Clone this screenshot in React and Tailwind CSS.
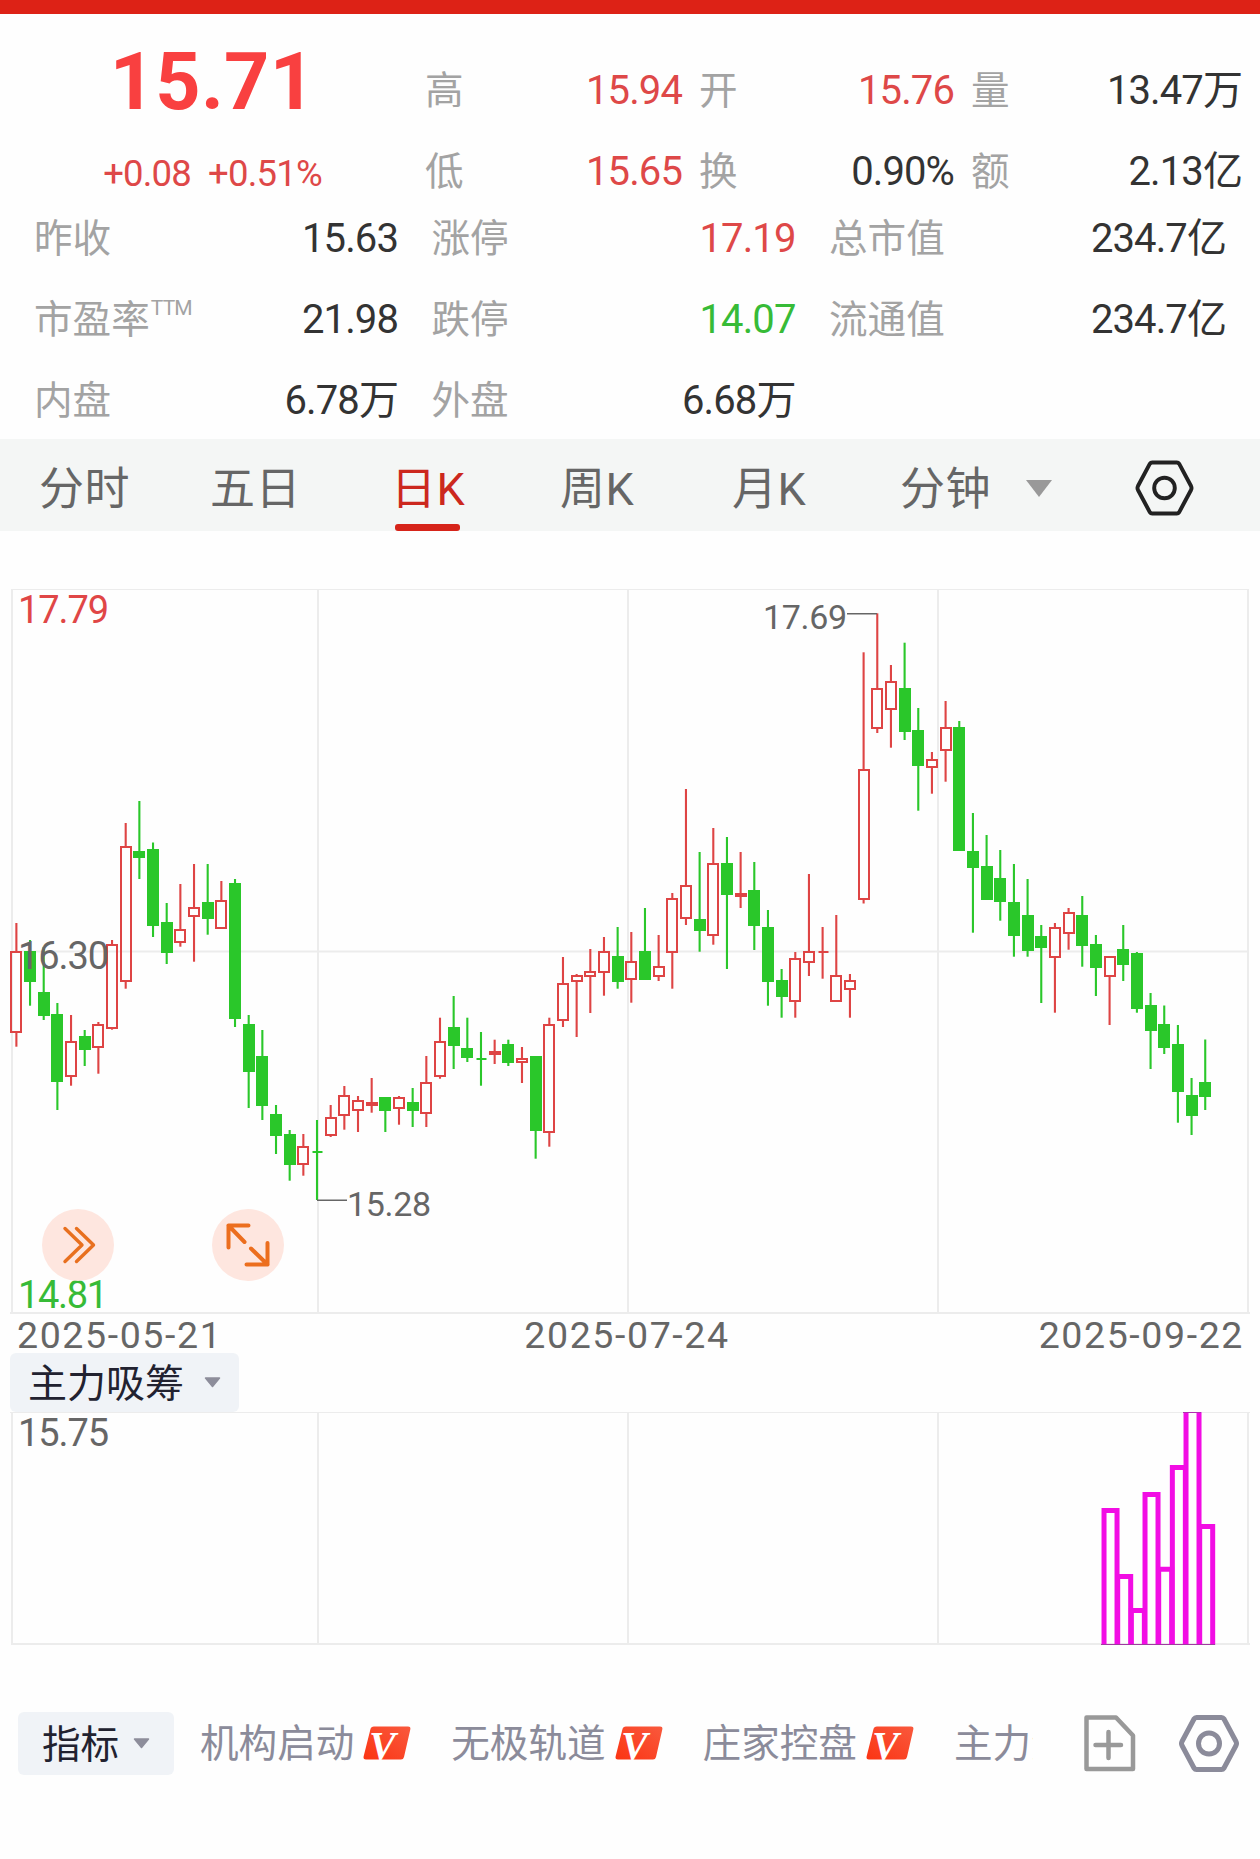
import React from 'react';

const UP = '#de4444';
const DOWN = '#2ac72a';
const GRID = '#ececec';

const STEP = 13.665;
const centerX = (i) => 16.33 + STEP * i;

// [direction, high, body top, body bottom, low] in chart units
const CANDLES = [
  ['u', 923, 951, 1033, 1046.7], ['d', 940, 951, 982, 1005.7], ['d', 947, 992, 1016, 1020],
  ['d', 1003, 1014, 1082, 1110], ['u', 1015, 1041, 1077, 1085.7], ['d', 1030, 1036, 1050, 1066],
  ['u', 1022, 1024, 1048, 1073.7], ['u', 940, 944, 1029, 1029.7], ['u', 823, 846, 982, 988.7],
  ['d', 801, 851, 858, 879], ['d', 842.5, 849, 926, 937], ['d', 903, 922, 953, 964],
  ['u', 884, 929, 943, 946.7], ['u', 864, 907, 917, 961.7], ['d', 864, 902, 919, 934.7],
  ['u', 881, 900, 929, 929], ['d', 879, 883, 1019, 1027], ['d', 1015, 1024, 1072, 1108],
  ['d', 1030, 1056, 1106, 1120], ['d', 1105, 1114, 1136, 1154], ['d', 1130, 1134, 1165, 1180.7],
  ['u', 1134, 1146, 1165, 1175.7], ['d', 1120, 1151, 1151, 1200], ['u', 1105, 1117, 1136, 1137],
  ['u', 1086, 1095, 1116, 1129.7], ['u', 1096, 1100, 1111, 1132], ['u', 1078, 1102, 1106, 1112.7],
  ['d', 1097, 1097, 1111, 1132], ['u', 1096, 1097, 1109, 1124.7], ['d', 1088, 1102, 1111, 1127],
  ['u', 1056, 1082, 1114, 1127], ['u', 1017.7, 1041, 1077, 1078.7], ['d', 996, 1027, 1046, 1069],
  ['d', 1017.7, 1048, 1058, 1062], ['d', 1032, 1058, 1058, 1085.7], ['u', 1039.7, 1051, 1055, 1064],
  ['d', 1039.7, 1044, 1063, 1066], ['u', 1047, 1058, 1063, 1083], ['d', 1056, 1056, 1131, 1158.7],
  ['u', 1017.7, 1024, 1133, 1146.7], ['u', 957, 983, 1021, 1027], ['u', 974, 975, 982, 1037],
  ['u', 949, 971, 977, 1013], ['u', 937, 951, 973, 995.7], ['d', 927, 956, 982, 988.7],
  ['u', 932, 961, 980, 1002.7], ['d', 908, 951, 980, 980], ['u', 935, 966, 977, 981],
  ['u', 893, 898, 953, 988.7], ['u', 789, 885, 919, 925], ['d', 852, 919, 931, 951.7],
  ['u', 828, 863, 936, 944.7], ['d', 837, 863, 895, 969], ['u', 852, 893, 897, 908],
  ['d', 862, 890, 926, 950], ['d', 910, 927, 982, 1005.7], ['d', 969, 980, 997, 1017.7],
  ['u', 952, 958, 1002, 1017.7], ['u', 874, 951, 963, 976], ['u', 927, 951, 951, 978.7],
  ['u', 915, 975, 1002, 1002], ['u', 974, 980, 990, 1017.7], ['u', 652.3, 769, 900, 903.5],
  ['u', 613.3, 688, 729, 733], ['u', 665, 681, 710, 747.7], ['d', 642.7, 688, 732, 740],
  ['d', 708, 730, 766, 810.7], ['u', 752, 759, 768, 793.7], ['u', 701, 727, 751, 781.7],
  ['d', 721, 727, 851, 851], ['d', 813, 851, 868, 932.7], ['d', 835, 866, 900, 900],
  ['d', 850, 878, 902, 920.7], ['d', 864, 902, 936, 956.7], ['d', 879, 915, 951, 956.7],
  ['d', 925, 936, 948, 1003], ['u', 923, 927, 958, 1012.7], ['u', 908, 912, 934, 949.7],
  ['d', 896, 915, 946, 966.7], ['d', 935, 944, 968, 996], ['u', 956, 956, 977, 1025],
  ['d', 925, 949, 965, 981], ['d', 952, 953, 1009, 1012.7], ['d', 993, 1005, 1031, 1069],
  ['d', 1005.5, 1024, 1048, 1054], ['d', 1025, 1044, 1092, 1122.7], ['d', 1078, 1095, 1116, 1135],
  ['d', 1039.5, 1082, 1097, 1110],
];

// tops of the last eight indicator bars
const BARS = [1508, 1574, 1608, 1492, 1566.7, 1465, 1408, 1524];

const TABS = [
  { label: '分时', width: 'w-[171px]' },
  { label: '五日', width: 'w-[171px]' },
  { label: '日K', width: 'w-[179px]', active: true },
  { label: '周K', width: 'w-[172px]' },
  { label: '月K', width: 'w-[168px]' },
  { label: '分钟', width: 'w-[107px]' },
];

const Candle = ({ index, data }) => {
  const [dir, high, top, bottom, low] = data;
  const x = centerX(index);
  const left = Math.round(x - 6);
  const color = dir === 'u' ? UP : DOWN;

  if (top === bottom) {
    return (
      <g fill={color}>
        <rect x={x - 1} y={high} width="2.1" height={low - high} />
        <rect x={left + 1.5} y={top} width="10" height="2" />
      </g>
    );
  }

  return (
    <g>
      <rect x={x - 1} y={high} width="2.1" height={top - high} fill={color} />
      <rect x={x - 1} y={bottom} width="2.1" height={low - bottom} fill={color} />
      {dir === 'u' ? (
        <rect x={left + 1} y={top + 1} width="10" height={bottom - top - 2} fill="none" stroke={color} strokeWidth="2" />
      ) : (
        <rect x={left} y={top} width="12" height={bottom - top} fill={color} />
      )}
    </g>
  );
};

const Label = ({ x, y, width, size = 38, fill = '#666', children }) => (
  <text x={x} y={y} fontSize={size} fill={fill} textLength={width}>
    {children}
  </text>
);

const PriceChart = () => (
  <svg viewBox="0 531 1260 783" className="block w-[1260px] h-[783px] overflow-visible">
    <g fill={GRID}>
      <rect x="11" y="589" width="1238" height="1" />
      <rect x="11" y="950.5" width="1238" height="2" />
      <rect x="10" y="1312" width="1240" height="2" />
      {[11, 317, 627, 937, 1247].map((x) => (
        <rect key={x} x={x} y="589" width="2" height="724" />
      ))}
    </g>
    {CANDLES.map((c, i) => (
      <Candle key={i} index={i} data={c} />
    ))}
    <path d="M847 613.7H877M317 1200.3H347" stroke="#666" strokeWidth="1.4" />
    <Label x="18" y="622.5" width="91" fill="#e04646">17.79</Label>
    <Label x="18" y="968.5" width="91">16.30</Label>
    <Label x="18" y="1307.5" width="90" fill="#37bb37">14.81</Label>
    <Label x="763" y="629" width="84" size={34}>17.69</Label>
    <Label x="347" y="1216" width="84" size={34}>15.28</Label>
  </svg>
);

const IndicatorChart = () => (
  <svg viewBox="0 1412 1260 233" className="block w-[1260px] h-[233px] overflow-hidden">
    <g fill={GRID}>
      <rect x="10" y="1412" width="1240" height="1" />
      <rect x="11" y="1643" width="1239" height="2" />
      {[11, 317, 627, 937, 1247].map((x) => (
        <rect key={x} x={x} y="1412" width="2" height="232" />
      ))}
    </g>
    <g fill="none" stroke="#f20de4" strokeWidth="5">
      {BARS.map((top, i) => {
        const x = centerX(80 + i) + 1;
        return <path key={i} d={`M${x - 6.5} 1645V${top + 2.5}H${x + 6.5}V1645`} />;
      })}
    </g>
    <path d="M1101 1644.5H1215" stroke="#a03aa0" strokeWidth="1" />
    <path d="M1183 1412.5H1201" stroke="#b030b0" strokeWidth="1" />
    <Label x="18" y="1445.5" width="91">15.75</Label>
  </svg>
);

const Caret = () => (
  <svg viewBox="0 0 17 11" className="w-[17px] h-[11px]">
    <path d="M1.5 1H15.5L8.5 9.5Z" fill="#8d8d9b" stroke="#8d8d9b" strokeWidth="1.5" strokeLinejoin="round" />
  </svg>
);

const HexIcon = ({ className, color, stroke }) => (
  <svg viewBox="0 0 60 57" className={className} fill="none" stroke={color} strokeWidth={stroke} strokeLinejoin="round">
    <path d="M17.5 2.5H42.5Q44 2.5 45 4L57 26.5Q58 28.5 57 30.5L45 53Q44 54.5 42.5 54.5H17.5Q16 54.5 15 53L3 30.5Q2 28.5 3 26.5L15 4Q16 2.5 17.5 2.5Z" />
    <circle cx="30" cy="28.5" r="10.5" />
  </svg>
);

const VipBadge = () => (
  <svg viewBox="0 0 48 34" className="w-[48px] h-[34px] shrink-0 overflow-visible">
    <defs>
      <linearGradient id="vip" x1="0" y1="1" x2="1" y2="0">
        <stop offset="0" stopColor="#fb3413" />
        <stop offset="1" stopColor="#f9593d" />
      </linearGradient>
    </defs>
    <path d="M11 0.5H45Q48 0.5 47.3 3.5L41 31Q40.4 33.5 38 33.5H3Q0 33.5 0.6 30.5L7.5 3Q8 0.5 11 0.5Z" fill="url(#vip)" />
    <text x="6" y="32.5" fontSize="40" fill="#fff" className="font-['Liberation_Serif',serif] font-bold italic">V</text>
  </svg>
);

const Stat = ({ label, sup, value, color = 'text-[#333]' }) => (
  <div className="flex items-center justify-between">
    <span className="text-[#a3a3a3] flex">
      {label}
      {sup && <sup className="top-0 mt-[1px] ml-[1px] text-[21px] leading-[32px] tracking-[-0.8px]">{sup}</sup>}
    </span>
    <span className={`text-[40px] tracking-[-0.9px] ${color}`}>{value}</span>
  </div>
);

const App = () => {
  return (
    <div className="w-[1260px] h-[1859px] overflow-hidden bg-[#fefefe] font-['Roboto','Noto_Sans_CJK_SC',sans-serif] text-[38.6px] whitespace-nowrap">
      <div className="h-[14px] bg-[#dd2216]" />

      {/* Quote summary */}
      <section className="h-[425px]">
        <div className="flex h-[184px] pt-[36px]">
          <div className="w-[425px] flex flex-col items-center text-[#de4848]">
            <div className="-mt-[1px] h-[63px] text-[79px] leading-[66px] font-bold text-[#f94040] tracking-[0.3px]">15.71</div>
            <div className="mt-[30px] flex gap-[17px] text-[36.5px] leading-[64px] tracking-[-0.8px]">
              <span>+0.08</span>
              <span>+0.51%</span>
            </div>
          </div>
          <div className="w-[817px] grid grid-cols-[257px_255px_271px] gap-x-[17px] auto-rows-[81px]">
            <Stat label="高" value="15.94" color="text-[#de4848]" />
            <Stat label="开" value="15.76" color="text-[#de4848]" />
            <Stat label="量" value="13.47万" />
            <Stat label="低" value="15.65" color="text-[#de4848]" />
            <Stat label="换" value="0.90%" />
            <Stat label="额" value="2.13亿" />
          </div>
        </div>
        <div className="ml-[34px] grid grid-cols-[364px_364px_397px] gap-x-[33.5px] auto-rows-[81px]">
          <Stat label="昨收" value="15.63" />
          <Stat label="涨停" value="17.19" color="text-[#de4848]" />
          <Stat label="总市值" value="234.7亿" />
          <Stat label="市盈率" sup="TTM" value="21.98" />
          <Stat label="跌停" value="14.07" color="text-[#37bb37]" />
          <Stat label="流通值" value="234.7亿" />
          <Stat label="内盘" value="6.78万" />
          <Stat label="外盘" value="6.68万" />
        </div>
      </section>

      {/* Period tabs */}
      <nav className="h-[92px] bg-[#f4f6f5] flex pl-[39px] text-[45px] leading-[101px] tracking-[0.4px] text-[#666]">
        {TABS.map((tab) => (
          <div key={tab.label} className={tab.width}>
            <div className={tab.active ? 'relative pl-[10px] text-[#cc281e]' : ''}>
              {tab.label}
              {tab.active && <span className="absolute left-[14px] top-[85px] w-[65px] h-[7px] rounded-[3px] bg-[#d6241a]" />}
            </div>
          </div>
        ))}
        <svg viewBox="0 0 26 17" className="w-[26px] h-[17px] mt-[41px] ml-[19px]">
          <path d="M0 0H26L13 17Z" fill="#999" />
        </svg>
        <HexIcon className="w-[59px] h-[56px] mt-[21px] ml-[83px]" color="#222" stroke="4" />
      </nav>

      {/* Candlestick chart */}
      <div className="relative">
        <PriceChart />
        <button className="absolute left-[42px] top-[678px] w-[72px] h-[72px] rounded-full bg-[#fee6df]">
          <svg viewBox="0 0 72 72" fill="none" stroke="#e8701f" strokeWidth="3.4" strokeLinecap="round" strokeLinejoin="round">
            <path d="M23 19.5L40 36L23 52.5M34.5 19.5L51.5 36L34.5 52.5" />
          </svg>
        </button>
        <button className="absolute left-[212px] top-[678px] w-[72px] h-[72px] rounded-full bg-[#fee6df]">
          <svg viewBox="0 0 72 72" fill="none" stroke="#ec6e1e" strokeWidth="4" strokeLinecap="round" strokeLinejoin="round">
            <path d="M16.5 38.5V16.5H36.5M16.5 16.5L32.5 33M55.5 34V55.5H34.5M55.5 55.5L39 39.5" />
          </svg>
        </button>
      </div>
      <div className="h-[39px] flex justify-between pl-[17px] pr-[16px] text-[37.5px] leading-[42px] text-[#666] tracking-[1.6px]">
        <span>2025-05-21</span>
        <span className="mr-[7px]">2025-07-24</span>
        <span>2025-09-22</span>
      </div>

      {/* Sub indicator */}
      <div className="ml-[10px] w-[229px] h-[59px] rounded-[6px] bg-[#f0f3f7] flex items-center pl-[18px] gap-[20px] text-[39px] leading-[59px] text-[#222230]">
        <span className="mt-[4px]">主力吸筹</span>
        <Caret />
      </div>
      <IndicatorChart />

      {/* Indicator shortcuts */}
      <div className="mt-[67px] h-[63px] pl-[18px] flex items-center text-[#8b8b9a]">
        <div className="w-[156px] h-[63px] rounded-[6px] bg-[#f0f3f7] flex items-center pl-[24px] gap-[14px] text-[#222230]">
          <span className="mt-[2px]">指标</span>
          <Caret />
        </div>
        <div className="ml-[26px] w-[833px] overflow-hidden flex items-center">
          {['机构启动', '无极轨道', '庄家控盘'].map((name) => (
            <div key={name} className="w-[251.3px] shrink-0 flex items-center gap-[9px]">
              <span className="mt-[1px]">{name}</span>
              <VipBadge />
            </div>
          ))}
          <span className="mt-[1px]">主力资金</span>
        </div>
        <svg viewBox="0 0 52 57" className="w-[52px] h-[57px] ml-[51px]" fill="none" stroke="#999" strokeWidth="4.5" strokeLinejoin="round" strokeLinecap="round">
          <path d="M2.5 2.5H32L49 20.5V54H2.5ZM24.5 17V43M11.5 30H37" />
        </svg>
        <HexIcon className="w-[60px] h-[57px] ml-[43px]" color="#8b8b9a" stroke="5" />
      </div>
    </div>
  );
};

export default App;
